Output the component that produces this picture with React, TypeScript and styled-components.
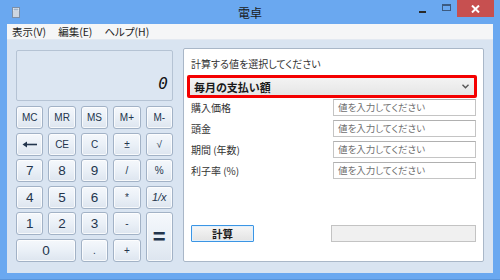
import React from "react";
import styled, { createGlobalStyle } from "styled-components";

const GlobalStyle = createGlobalStyle`
  html, body { margin: 0; padding: 0; }
  body {
    width: 500px; height: 280px; overflow: hidden;
    font-family: "Noto Sans CJK JP", "Noto Sans", sans-serif;
    background: #6aa8f0;
  }
  * { box-sizing: border-box; }
`;

const Window = styled.div`
  width: 500px;
  height: 280px;
  background: #6aa8f0;
  display: flex;
  flex-direction: column;
  padding: 0 7px 6px 7px;
  border-bottom: 1px solid #5a95da;
`;

const TitleBar = styled.div`
  height: 25px;
  display: grid;
  grid-template-columns: 1fr auto 1fr;
  align-items: start;
`;

const AppIcon = styled.svg`
  margin: 7px 0 0 5px;
  display: block;
`;

const Title = styled.div`
  font-size: 12px;
  line-height: 14px;
  padding-top: 6px;
  color: #1a1a1a;
  font-feature-settings: "palt";
`;

const Controls = styled.div`
  justify-self: end;
  display: flex;
  margin-right: -1px;
`;

const CtrlBtn = styled.div<{ $w: number; $close?: boolean }>`
  width: ${(p) => p.$w}px;
  height: 17px;
  display: flex;
  align-items: center;
  justify-content: center;
  background: ${(p) => (p.$close ? "#c75050" : "transparent")};
`;

const MinGlyph = styled.div`
  width: 7px;
  height: 2px;
  margin-top: 7px;
  background: #2a2a2a;
`;

const MaxGlyph = styled.div`
  width: 9px;
  height: 7px;
  margin-top: -2px;
  border: 1px solid #3c5a80;
  border-top-width: 2px;
`;

const Client = styled.div`
  flex: 1;
  display: flex;
  flex-direction: column;
  background: #d9e4f1;
`;

const MenuBar = styled.div`
  height: 16px;
  display: flex;
  gap: 12px;
  padding-left: 5px;
  background: #f5f6f7;
  border-bottom: 1px solid #e3e9f1;
`;

const MenuItem = styled.span`
  font-size: 10.5px;
  line-height: 15px;
  color: #1e1e1e;
  font-feature-settings: "palt";
`;

const Body = styled.div`
  flex: 1;
  display: flex;
  gap: 10px;
  padding: 8px 9px 11px 9px;
`;

const CalcPane = styled.div`
  width: 157px;
  padding-top: 2px;
  display: flex;
  flex-direction: column;
  gap: 5px;
`;

const Display = styled.div`
  height: 51px;
  border: 1px solid #b5c3d4;
  border-radius: 2px;
  background: #dce6f2;
  display: flex;
  align-items: flex-end;
  justify-content: flex-end;
  padding: 0 4px 7px;
  font-family: "DejaVu Sans Mono", monospace;
  font-style: oblique;
  font-size: 16px;
  line-height: 18px;
  color: #111;
`;

const Keypad = styled.div`
  display: grid;
  grid-template-columns: repeat(5, 1fr);
  grid-template-rows: repeat(6, 23px);
  column-gap: 5px;
  row-gap: 3.6px;
`;

const Key = styled.button<{ $col?: number; $row?: number; $big?: boolean; $huge?: boolean }>`
  grid-column: span ${(p) => p.$col ?? 1};
  grid-row: span ${(p) => p.$row ?? 1};
  margin: 0;
  padding: 0;
  border: 1px solid #a2b2c6;
  border-radius: 3px;
  background: linear-gradient(#f5f8fc 0%, #eaf0f7 50%, #dde5ef 100%);
  box-shadow: inset 0 0 0 1px rgba(255, 255, 255, 0.75);
  color: #23354d;
  font-family: "Liberation Sans", "DejaVu Sans", sans-serif;
  font-size: ${(p) => (p.$huge ? 22 : p.$big ? 13.5 : 10)}px;
  font-weight: ${(p) => (p.$huge ? 700 : 400)};
  display: flex;
  align-items: center;
  justify-content: center;
`;

const Panel = styled.div`
  flex: 1;
  background: #fff;
  border: 1px solid #a9b7c8;
  border-radius: 2px;
  display: flex;
  flex-direction: column;
  padding: 8px 7px 19px 7px;
`;

const PanelLabel = styled.div`
  font-size: 10px;
  line-height: 14px;
  color: #333;
  font-feature-settings: "palt";
`;

const Select = styled.div`
  height: 23px;
  margin: 4px -1px 1px -4px;
  border: 3px solid #f40000;
  border-radius: 2px;
  background: linear-gradient(#f3f3f3, #e6e6e6);
  display: flex;
  align-items: center;
  justify-content: space-between;
  padding: 0 5px 0 4px;
`;

const SelectText = styled.span`
  font-size: 11px;
  font-weight: 700;
  color: #1a1a1a;
  font-feature-settings: "palt";
`;

const Fields = styled.div`
  display: grid;
  grid-template-columns: 1fr 143px;
  grid-auto-rows: 17px;
  row-gap: 4px;
  align-items: center;
`;

const FieldLabel = styled.span`
  font-size: 10px;
  color: #333;
  font-feature-settings: "palt";
`;

const Field = styled.div`
  height: 17px;
  border: 1px solid #c4c4c4;
  border-top-color: #b0b0b0;
  background: #fff;
  padding-left: 4px;
  font-size: 9.5px;
  line-height: 15px;
  color: #707070;
  font-feature-settings: "palt";
`;

const BottomRow = styled.div`
  margin-top: auto;
  display: flex;
  justify-content: space-between;
`;

const CalcButton = styled.button`
  width: 63px;
  height: 17px;
  margin: 0;
  padding: 0;
  border: 1px solid #3b95e4;
  border-radius: 1px;
  background: linear-gradient(#f6f6f6, #e3e3e3);
  box-shadow: inset 0 0 0 1px #e2f0fc;
  font-family: "Noto Sans CJK JP", sans-serif;
  font-size: 10.5px;
  font-weight: 700;
  color: #1a1a1a;
  display: flex;
  align-items: center;
  justify-content: center;
`;

const Result = styled.div`
  width: 145px;
  height: 17px;
  border: 1px solid #c3c3c3;
  background: #f0f0f0;
`;

const keys: { label: React.ReactNode; col?: number; row?: number; big?: boolean; huge?: boolean }[] = [
  { label: "MC" }, { label: "MR" }, { label: "MS" }, { label: "M+" }, { label: "M-" },
  {
    label: (
      <svg width="15" height="7" viewBox="0 0 15 7">
        <path d="M15 3.5H3" stroke="#23354d" strokeWidth="1.6" />
        <path d="M0.5 3.5L5 0.5V6.5Z" fill="#23354d" />
      </svg>
    ),
  },
  { label: "CE" }, { label: "C" }, { label: "±" }, { label: "√" },
  { label: "7", big: true }, { label: "8", big: true }, { label: "9", big: true }, { label: "/" }, { label: "%" },
  { label: "4", big: true }, { label: "5", big: true }, { label: "6", big: true }, { label: "*" },
  { label: <i style={{ fontSize: 11 }}>1/x</i> },
  { label: "1", big: true }, { label: "2", big: true }, { label: "3", big: true }, { label: "-" },
  { label: "=", row: 2, huge: true },
  { label: "0", col: 2, big: true }, { label: "." }, { label: "+" },
];

const fields = ["購入価格", "頭金", "期間 (年数)", "利子率 (%)"];

export default function App() {
  return (
    <>
      <GlobalStyle />
      <Window>
        <TitleBar>
          <AppIcon width="8" height="11" viewBox="0 0 8 11">
            <rect x="0.5" y="0.5" width="7" height="10" fill="#eef3f8" stroke="#7d8fa6" />
            <rect x="1.5" y="1.5" width="5" height="2" fill="#9fb3c9" />
            <path d="M1.5 5h1M3.5 5h1M5.5 5h1M1.5 7h1M3.5 7h1M5.5 7h1M1.5 9h1M3.5 9h1M5.5 9h1" stroke="#6b7f98" />
          </AppIcon>
          <Title>電卓</Title>
          <Controls>
            <CtrlBtn $w={25}><MinGlyph /></CtrlBtn>
            <CtrlBtn $w={22}><MaxGlyph /></CtrlBtn>
            <CtrlBtn $w={37} $close>
              <svg width="9" height="8" viewBox="0 0 9 8">
                <path d="M1 0.5L8 7.5M8 0.5L1 7.5" stroke="#fff" strokeWidth="2" />
              </svg>
            </CtrlBtn>
          </Controls>
        </TitleBar>
        <Client>
          <MenuBar>
            <MenuItem>表示(V)</MenuItem>
            <MenuItem>編集(E)</MenuItem>
            <MenuItem>ヘルプ(H)</MenuItem>
          </MenuBar>
          <Body>
            <CalcPane>
              <Display>0</Display>
              <Keypad>
                {keys.map((k, i) => (
                  <Key key={i} $col={k.col} $row={k.row} $big={k.big} $huge={k.huge}>
                    {k.label}
                  </Key>
                ))}
              </Keypad>
            </CalcPane>
            <Panel>
              <PanelLabel>計算する値を選択してください</PanelLabel>
              <Select>
                <SelectText>毎月の支払い額</SelectText>
                <svg width="7" height="5" viewBox="0 0 7 5">
                  <path d="M0.5 0.8L3.5 3.8L6.5 0.8" stroke="#555" strokeWidth="1.4" fill="none" />
                </svg>
              </Select>
              <Fields>
                {fields.map((f) => (
                  <React.Fragment key={f}>
                    <FieldLabel>{f}</FieldLabel>
                    <Field>値を入力してください</Field>
                  </React.Fragment>
                ))}
              </Fields>
              <BottomRow>
                <CalcButton>計算</CalcButton>
                <Result />
              </BottomRow>
            </Panel>
          </Body>
        </Client>
      </Window>
    </>
  );
}
